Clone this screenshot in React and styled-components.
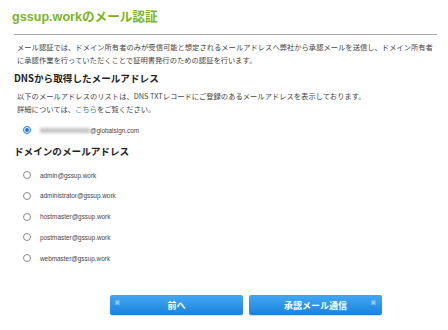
import React from "react";
import styled, { createGlobalStyle } from "styled-components";

const Global = createGlobalStyle`
  html, body { margin: 0; padding: 0; background: #fff; }
  body { font-family: "Noto Sans CJK JP", "Noto Sans", sans-serif; color: #333; }
`;

const Page = styled.div`
  width: 448px;
  height: 330px;
  box-sizing: border-box;
  padding: 6px 11px 0 12px;
  display: flex;
  flex-direction: column;
`;

const Title = styled.h1`
  margin: 0;
  font-size: 12.6px;
  line-height: 22px;
  font-weight: 700;
  color: #7ab51d;
  font-family: "Liberation Sans", "Noto Sans CJK JP", sans-serif;
`;

const Rule = styled.hr`
  margin: 6px 0 0 2px;
  border: 0;
  border-top: 1px solid #a8a8a8;
  height: 0;
`;

const Para = styled.p`
  margin: ${p => p.$mt || 0}px 0 0 ${p => p.$ml ?? 5}px;
  font-size: 7.3px;
  line-height: 13px;
  color: #444;
  white-space: nowrap;
`;

const Heading = styled.h2`
  margin: ${p => p.$mt}px 0 0 2px;
  font-size: 9.6px;
  line-height: 14px;
  font-weight: 700;
  color: #222;
`;

const Link = styled.span`
  color: #2a7fd4;
`;

const List = styled.div`
  display: flex;
  flex-direction: column;
  gap: ${p => p.$gap}px;
  margin-top: ${p => p.$mt}px;
  padding-left: 11px;
`;

const Row = styled.label`
  display: flex;
  align-items: center;
  height: 12px;
  gap: 6px;
`;

const Radio = styled.span`
  width: 8px;
  height: 8px;
  border-radius: 50%;
  box-sizing: border-box;
  border: 1px solid ${p => (p.$on ? "#1a73e8" : "#8a8a8a")};
  background: #fff;
  display: flex;
  align-items: center;
  justify-content: center;
  flex: none;
  &::after {
    content: "";
    width: 4px;
    height: 4px;
    border-radius: 50%;
    background: ${p => (p.$on ? "#1a73e8" : "transparent")};
  }
`;

const Email = styled.span`
  font-family: "Liberation Sans", Arial, sans-serif;
  font-size: 6.4px;
  color: #444;
  display: flex;
  align-items: center;
  margin-left: ${p => p.$ml || 0}px;
`;

const Blur = styled.span`
  display: inline-block;
  width: 50px;
  height: 5px;
  background: #c4c4c4;
  filter: blur(1.6px);
  margin-right: 0;
`;

const Buttons = styled.div`
  display: flex;
  gap: 6px;
  margin-top: 31px;
  padding-left: 98px;
`;

const Btn = styled.button`
  position: relative;
  width: 133px;
  height: 20px;
  border: 0;
  border-radius: 2px;
  background: linear-gradient(#42a8f3, #1b82dc);
  box-shadow: 0 1px 1px rgba(0,0,0,0.15);
  color: #fff;
  font-family: "Noto Sans CJK JP", sans-serif;
  font-weight: 700;
  font-size: 9px;
  padding: 0;
  display: flex;
  align-items: center;
  justify-content: center;
`;

const Knob = styled.span`
  position: absolute;
  top: 5px;
  ${p => (p.$right ? "right: 6px;" : "left: 5px;")}
  width: 5px;
  height: 5px;
  border-radius: 1px;
  background: #8cc6f2;
  box-shadow: inset 0 0 0 1px #6aaee8;
`;

const domain = ["admin", "administrator", "hostmaster", "postmaster", "webmaster"];

export default function App() {
  return (
    <>
      <Global />
      <Page>
        <Title>gssup.workのメール認証</Title>
        <Rule />
        <Para $mt={6}>
          メール認証では、ドメイン所有者のみが受信可能と想定されるメールアドレスへ弊社から承認メールを送信し、ドメイン所有者
          <br />
          に承認作業を行っていただくことで証明書発行のための認証を行います。
        </Para>
        <Heading $mt={4}>DNSから取得したメールアドレス</Heading>
        <Para $mt={5}>
          以下のメールアドレスのリストは、DNS TXTレコードにご登録のあるメールアドレスを表示しております。
          <br />
          詳細については、<Link>こちら</Link>をご覧ください。
        </Para>
        <List $gap={0} $mt={8}>
          <Row>
            <Radio $on />
            <Email $ml={3}>
              <Blur />@globalsign.com
            </Email>
          </Row>
        </List>
        <Heading $mt={8}>ドメインのメールアドレス</Heading>
        <List $gap={8.8} $mt={11}>
          {domain.map(d => (
            <Row key={d}>
              <Radio />
              <Email $ml={3}>{d}@gssup.work</Email>
            </Row>
          ))}
        </List>
        <Buttons>
          <Btn>
            <Knob />
            前へ
          </Btn>
          <Btn>
            承認メール通信
            <Knob $right />
          </Btn>
        </Buttons>
      </Page>
    </>
  );
}
